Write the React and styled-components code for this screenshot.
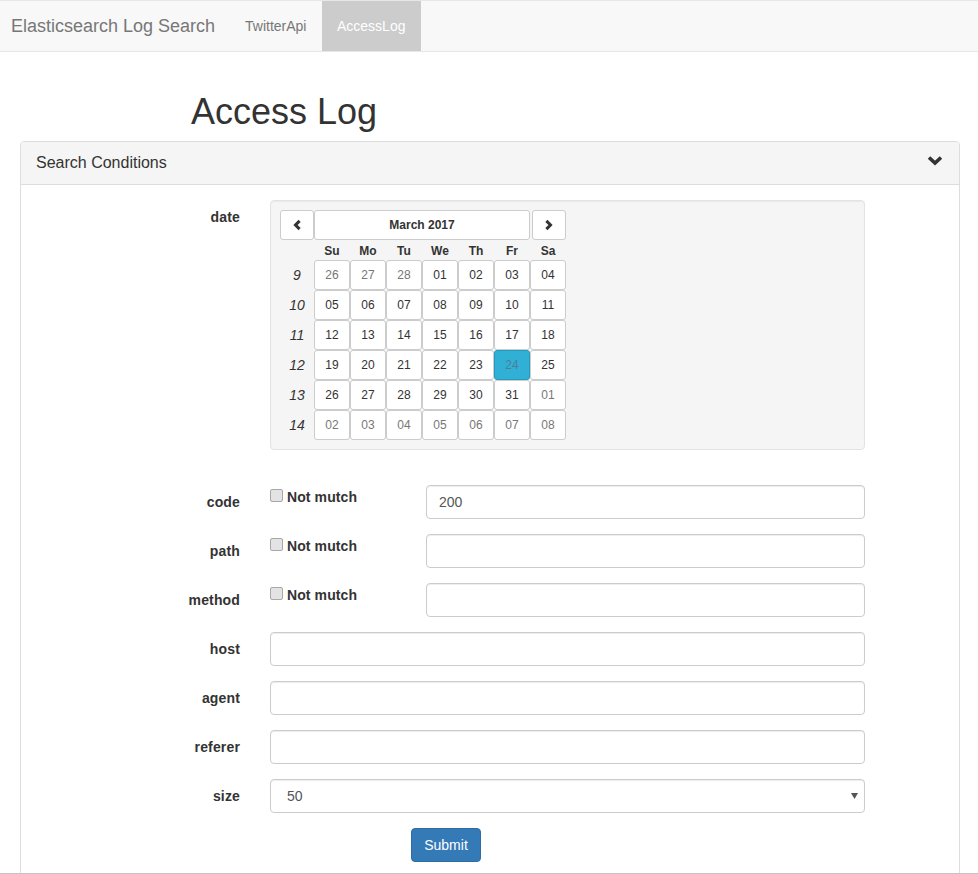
import React from "react";
import styled, { createGlobalStyle } from "styled-components";

const Global = createGlobalStyle`
  * { box-sizing: border-box; }
  html, body { margin: 0; padding: 0; height: 874px; overflow: hidden; background: #fff; }
  body { font-family: "Liberation Sans", Arial, sans-serif; font-size: 14px; line-height: 20px; color: #333; }
`;

const Page = styled.div`
  position: relative;
  height: 874px;
  overflow: hidden;
`;
const BottomEdge = styled.div`
  position: absolute;
  left: 0;
  right: 0;
  bottom: 0;
  height: 1px;
  background: #c4c4c4;
`;
const Navbar = styled.nav`
  display: flex;
  height: 52px;
  background: #f8f8f8;
  border-top: 1px solid #e7e7e7;
  border-bottom: 1px solid #e7e7e7;
`;
const Brand = styled.a`
  width: 230px;
  padding: 15px 0 0 11px;
  font-size: 18px;
  color: #777;
`;
const NavItem = styled.a`
  width: ${(p) => p.$width}px;
  padding: 15px;
  height: 50px;
  white-space: nowrap;
  color: ${(p) => (p.$active ? "#fff" : "#777")};
  background: ${(p) => (p.$active ? "#ccc" : "transparent")};
`;
const Title = styled.h1`
  margin: 40px 0 9px;
  padding-left: 191px;
  font-size: 36px;
  line-height: 39.6px;
  font-weight: 500;
  color: #333;
`;
const Panel = styled.section`
  margin: 0 18px 0 20px;
  border: 1px solid #ddd;
  border-radius: 4px;
  background: #fff;
`;
const PanelHeading = styled.header`
  display: flex;
  justify-content: space-between;
  align-items: flex-start;
  height: 43px;
  padding: 10px 16px 0 15px;
  background: #f5f5f5;
  border-bottom: 1px solid #ddd;
  border-radius: 3px 3px 0 0;
  font-size: 16px;
  line-height: 22px;
`;
const Collapse = styled.svg`
  width: 16px;
  height: 12px;
  margin-top: 3px;
`;
const PanelBody = styled.div`
  padding-top: 15px;
`;
const Row = styled.div`
  display: grid;
  grid-template-columns: 219px 595px;
  column-gap: 30px;
  margin-bottom: 15px;
`;
const Label = styled.label`
  padding-top: 7px;
  text-align: right;
  font-weight: 700;
  letter-spacing: 0.15px;
`;
const Well = styled.div`
  height: 250px;
  margin-bottom: 20px;
  padding: 9px;
  background: #f5f5f5;
  border: 1px solid #e3e3e3;
  border-radius: 4px;
  box-shadow: inset 0 1px 1px rgba(0, 0, 0, 0.05);
`;
const Calendar = styled.div`
  display: grid;
  grid-template-columns: 34px repeat(7, 36px);
  grid-template-rows: 30px 20px repeat(6, 30px);
  width: 286px;
  font-size: 12px;
`;
const CalHeader = styled.div`
  grid-column: 1 / -1;
  display: flex;
`;
const NavButton = styled.button`
  display: flex;
  align-items: center;
  justify-content: center;
  width: 34px;
  height: 30px;
  padding: 0;
  background: #fff;
  border: 1px solid #ccc;
  border-radius: 3px;
  color: #333;
  margin-left: ${(p) => (p.$next ? "2px" : "0")};
`;
const MonthButton = styled.button`
  width: 216px;
  height: 30px;
  padding: 0;
  background: #fff;
  border: 1px solid #ccc;
  border-radius: 3px;
  font: 700 12px/18px "Liberation Sans", Arial, sans-serif;
  color: #333;
`;
const Weekdays = styled.div`
  grid-column: 1 / -1;
  display: grid;
  grid-template-columns: 34px repeat(7, 36px);
  height: 20px;
  padding-top: 1px;
  text-align: center;
  font-weight: 700;
  line-height: 20px;
`;
const WeekNo = styled.em`
  text-align: center;
  font-size: 14px;
  line-height: 30px;
`;
const Day = styled.button`
  height: 30px;
  padding: 0;
  background: ${(p) => (p.$selected ? "#31b0d5" : "#fff")};
  border: 1px solid ${(p) => (p.$selected ? "#269abc" : "#ccc")};
  border-radius: 3px;
  font: 12px/18px "Liberation Sans", Arial, sans-serif;
  color: ${(p) => (p.$selected ? "#4f7d99" : p.$muted ? "#777" : "#333")};
`;
const MatchRow = styled.div`
  display: grid;
  grid-template-columns: 156px 439px;
`;
const Check = styled.label`
  display: flex;
  align-items: flex-start;
  font-weight: 700;
  height: 24px;
  padding-top: 2px;
  letter-spacing: 0.1px;
`;
const Box = styled.input`
  appearance: none;
  width: 13px;
  height: 13px;
  margin: 2px 4px 0 0;
  background: #e3e3e3;
  border: 1px solid #a8a8a8;
  border-radius: 2px;
`;
const TextInput = styled.input`
  display: block;
  width: 100%;
  height: 34px;
  padding: 6px 12px;
  font: 14px/20px "Liberation Sans", Arial, sans-serif;
  color: #555;
  background: #fff;
  border: 1px solid #ccc;
  border-radius: 4px;
  box-shadow: inset 0 1px 1px rgba(0, 0, 0, 0.075);
`;
const SelectWrap = styled.div`
  position: relative;
`;
const Select = styled.select`
  display: block;
  appearance: none;
  width: 100%;
  height: 34px;
  padding: 6px 16px;
  font: 14px/20px "Liberation Sans", Arial, sans-serif;
  color: #555;
  background: #fff;
  border: 1px solid #ccc;
  border-radius: 4px;
  box-shadow: inset 0 1px 1px rgba(0, 0, 0, 0.075);
`;
const Caret = styled.svg`
  position: absolute;
  top: 14px;
  right: 7px;
  width: 7px;
  height: 6px;
  fill: #555;
  pointer-events: none;
`;
const Submit = styled.button`
  width: 70px;
  height: 34px;
  margin-left: 141px;
  padding: 0;
  font: 14px/20px "Liberation Sans", Arial, sans-serif;
  color: #fff;
  background: #337ab7;
  border: 1px solid #2e6da4;
  border-radius: 4px;
`;

const Chevron = ({ points }) => (
  <svg width="10" height="12" viewBox="0 0 10 12" fill="none" stroke="#333" strokeWidth="3">
    <polyline points={points} />
  </svg>
);

const weeks = [
  [9, ["26", "27", "28", "01", "02", "03", "04"], (i) => i < 3],
  [10, ["05", "06", "07", "08", "09", "10", "11"], () => false],
  [11, ["12", "13", "14", "15", "16", "17", "18"], () => false],
  [12, ["19", "20", "21", "22", "23", "24", "25"], () => false],
  [13, ["26", "27", "28", "29", "30", "31", "01"], (i) => i === 6],
  [14, ["02", "03", "04", "05", "06", "07", "08"], () => true],
];

const MatchField = ({ label, value }) => (
  <Row>
    <Label>{label}</Label>
    <MatchRow>
      <Check>
        <Box type="checkbox" />
        Not mutch
      </Check>
      <TextInput defaultValue={value} />
    </MatchRow>
  </Row>
);

const Field = ({ label }) => (
  <Row>
    <Label>{label}</Label>
    <TextInput />
  </Row>
);

export default function App() {
  return (
    <Page>
      <Global />
      <Navbar>
        <Brand>Elasticsearch Log Search</Brand>
        <NavItem $width={92}>TwitterApi</NavItem>
        <NavItem $width={99} $active>
          AccessLog
        </NavItem>
      </Navbar>
      <Title>Access Log</Title>
      <Panel>
        <PanelHeading>
          Search Conditions
          <Collapse viewBox="0 0 16 12" fill="none" stroke="#333" strokeWidth="3.6">
            <polyline points="2,2.5 8,8 14,2.5" />
          </Collapse>
        </PanelHeading>
        <PanelBody>
          <Row>
            <Label>date</Label>
            <Well>
              <Calendar>
                <CalHeader>
                  <NavButton>
                    <Chevron points="7.6,1.9 3.5,6 7.6,10.1" />
                  </NavButton>
                  <MonthButton>March 2017</MonthButton>
                  <NavButton $next>
                    <Chevron points="2.4,1.9 6.5,6 2.4,10.1" />
                  </NavButton>
                </CalHeader>
                <Weekdays>
                  <span />
                  {["Su", "Mo", "Tu", "We", "Th", "Fr", "Sa"].map((d) => (
                    <span key={d}>{d}</span>
                  ))}
                </Weekdays>
                {weeks.map(([n, days, muted]) => (
                  <React.Fragment key={n}>
                    <WeekNo>{n}</WeekNo>
                    {days.map((d, i) => (
                      <Day key={i} $muted={muted(i)} $selected={n === 12 && d === "24"}>
                        {d}
                      </Day>
                    ))}
                  </React.Fragment>
                ))}
              </Calendar>
            </Well>
          </Row>
          <MatchField label="code" value="200" />
          <MatchField label="path" />
          <MatchField label="method" />
          <Field label="host" />
          <Field label="agent" />
          <Field label="referer" />
          <Row>
            <Label>size</Label>
            <SelectWrap>
              <Select defaultValue="50">
                <option>10</option>
                <option>50</option>
                <option>100</option>
              </Select>
              <Caret viewBox="0 0 7 6">
                <polygon points="0,0 7,0 3.5,6" />
              </Caret>
            </SelectWrap>
          </Row>
          <Row>
            <span />
            <div>
              <Submit>Submit</Submit>
            </div>
          </Row>
        </PanelBody>
      </Panel>
      <BottomEdge />
    </Page>
  );
}
